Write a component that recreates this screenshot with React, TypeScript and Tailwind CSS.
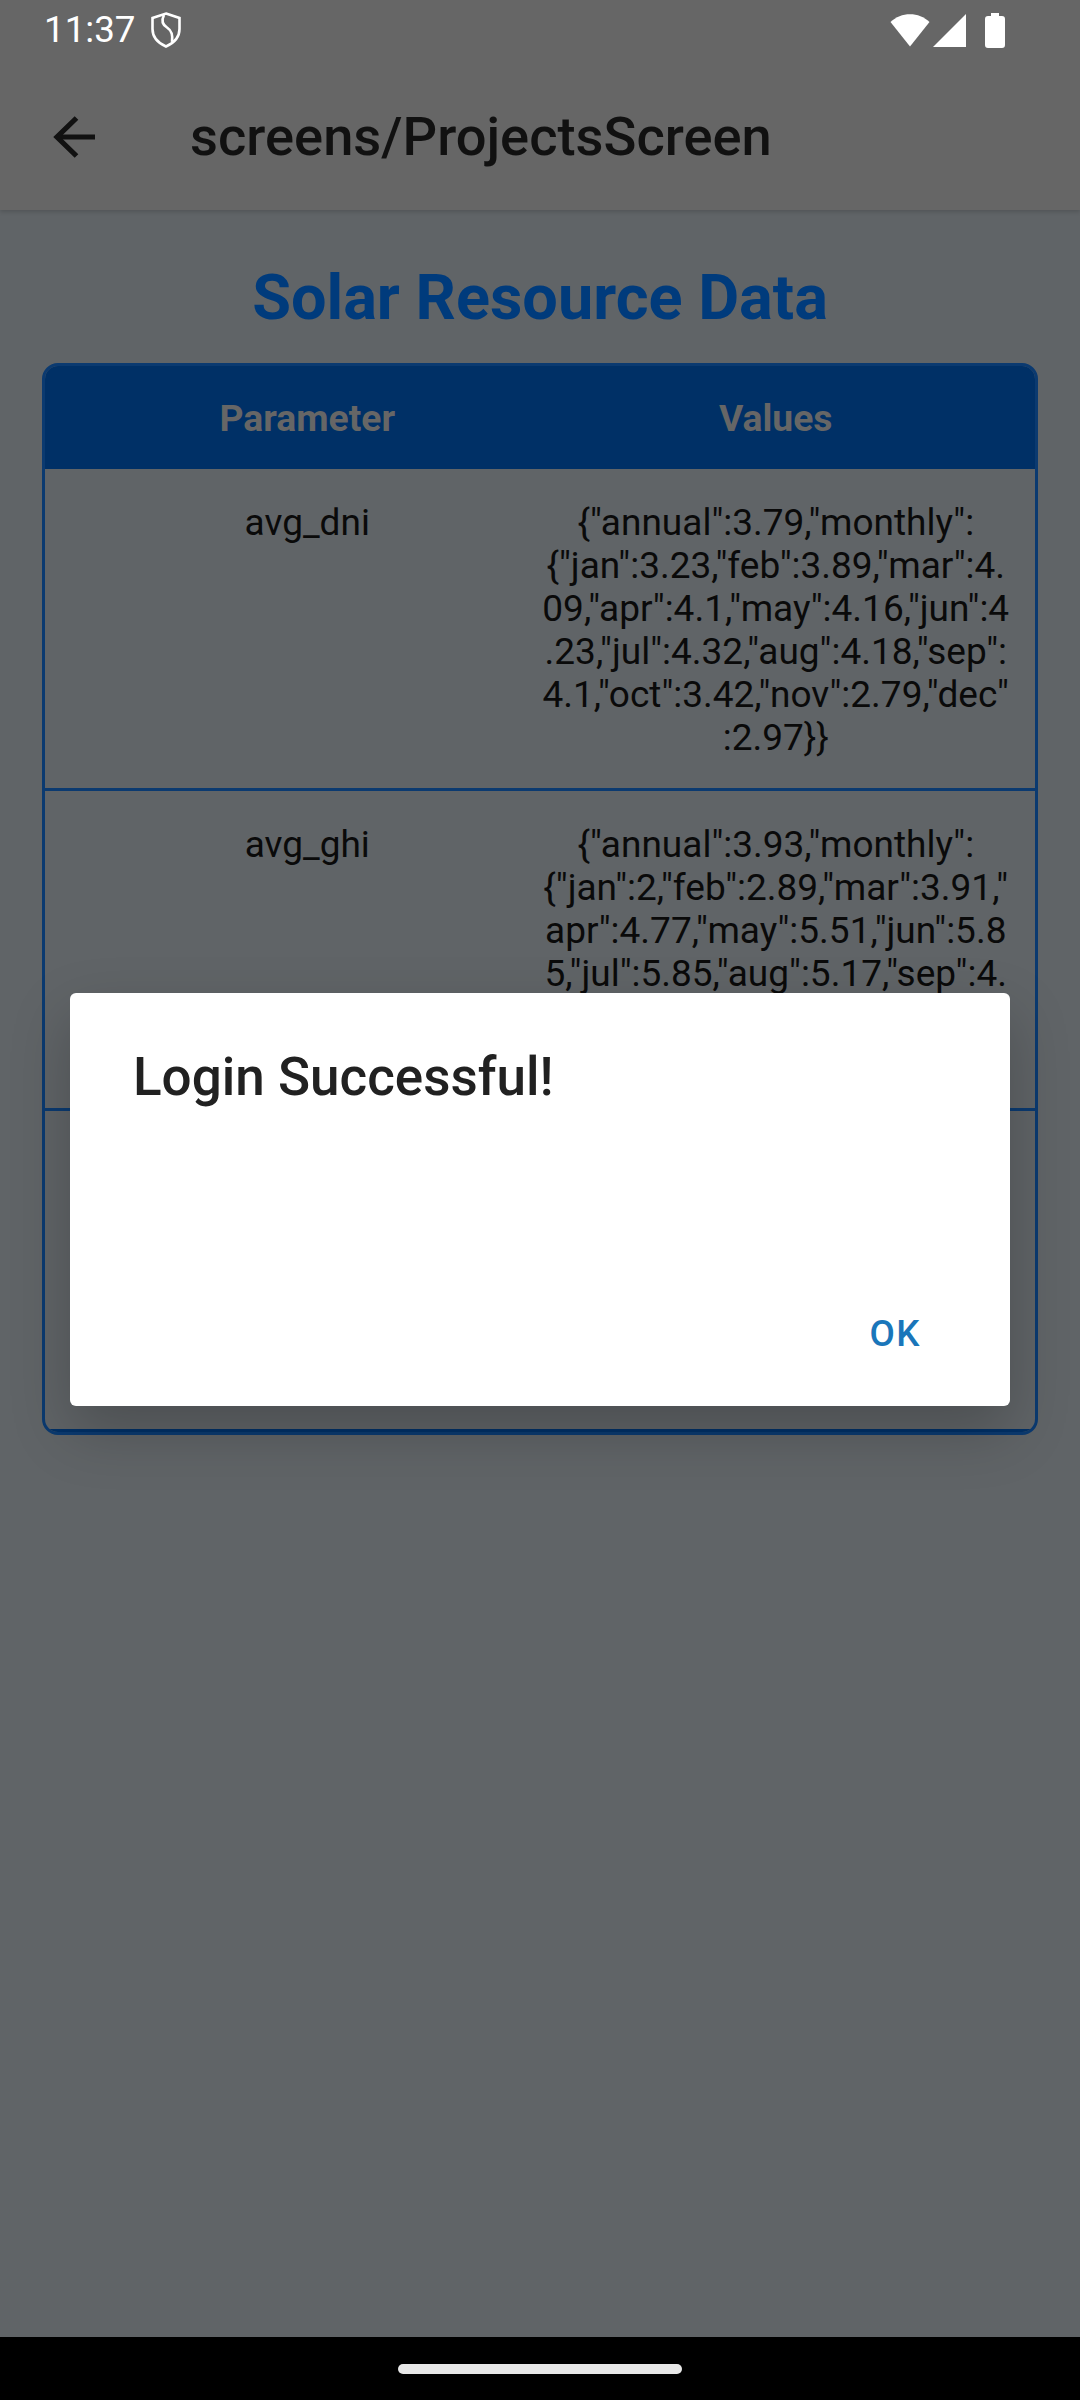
const dniLines = [
  '{"annual":3.79,"monthly":',
  '{"jan":3.23,"feb":3.89,"mar":4.',
  '09,"apr":4.1,"may":4.16,"jun":4',
  '.23,"jul":4.32,"aug":4.18,"sep":',
  '4.1,"oct":3.42,"nov":2.79,"dec"',
  ':2.97}}',
];

const ghiLines = [
  '{"annual":3.93,"monthly":',
  '{"jan":2,"feb":2.89,"mar":3.91,"',
  'apr":4.77,"may":5.51,"jun":5.8',
  '5,"jul":5.85,"aug":5.17,"sep":4.',
];

export default function App() {
  return (
    <div className="relative flex flex-col w-[1080px] h-[2400px] overflow-hidden bg-[#606467] font-['Roboto',sans-serif]">
      <div className="h-[210px] shrink-0 bg-[#666666] shadow-[0_2px_4px_rgba(0,0,0,0.15)]">
        <div className="flex items-center justify-between h-[60px] pl-[44px] pr-[75px]">
          <div className="flex items-center gap-[15px] text-white text-[36.75px] leading-[60px]">
            <span>11:37</span>
            <svg width="30" height="36" viewBox="0 0 30 36" fill="none" stroke="white" strokeWidth="2.6">
              <path d="M15 1.5 L28.5 6 V17 C28.5 25 23 31 15 34.5 C7 31 1.5 25 1.5 17 V6 Z" />
              <path d="M13 3 C10 9 12 13 16 15.5 C20 18 22 23 21 30" />
            </svg>
          </div>
          <div className="flex items-center">
            <svg width="40" height="34" viewBox="0 0 40 34" fill="white">
              <path d="M0.5 9 C11 -1.5 29 -1.5 39.5 9 L20 33.5 Z" />
            </svg>
            <svg className="ml-[3px]" width="33" height="33" viewBox="0 0 33 33" fill="white">
              <path d="M33 0 V33 H0 Z" />
            </svg>
            <svg className="ml-[19px]" width="20" height="35" viewBox="0 0 20 35" fill="white">
              <path d="M6 0 H14 V3 H17 Q20 3 20 6 V32 Q20 35 17 35 H3 Q0 35 0 32 V6 Q0 3 3 3 H6 Z" />
            </svg>
          </div>
        </div>
        <div className="flex items-center h-[150px] pt-[3px]">
          <svg className="ml-[53px]" width="42" height="42" viewBox="0 0 42 42" fill="none" stroke="#111111" strokeWidth="5.2">
            <path d="M42 21 H4" />
            <path d="M23.5 2 L4 21 L23.5 40" />
          </svg>
          <div className="ml-[95px] text-[54.3px] leading-[62px] font-medium text-[#111111]">screens/ProjectsScreen</div>
        </div>
      </div>

      <div className="flex-1 px-[42px]">
        <h1 className="h-[153px] pt-[50px] text-center text-[63px] leading-[75px] font-bold text-[#003b7c]">Solar Resource Data</h1>
        <div className="rounded-[16px] border-[3px] border-[#0b3a70] overflow-hidden">
          <div className="flex items-center h-[103px] pt-[3px] pl-[28px] pr-[25px] bg-[#003066] text-[37.3px] font-bold text-[#666666] text-center">
            <div className="flex-1">Parameter</div>
            <div className="flex-1">Values</div>
          </div>
          <div className="flex h-[322px] pl-[28px] pr-[25px] pt-[32px] border-b-[3px] border-[#0b3a70] text-[37px] leading-[43px] text-[#0a0a0a] text-center">
            <div className="flex-1">avg_dni</div>
            <div className="flex-1 whitespace-nowrap">
              {dniLines.map((line) => (
                <div key={line}>{line}</div>
              ))}
            </div>
          </div>
          <div className="flex h-[320px] pl-[28px] pr-[25px] pt-[32px] border-b-[3px] border-[#0b3a70] text-[37px] leading-[43px] text-[#0a0a0a] text-center">
            <div className="flex-1">avg_ghi</div>
            <div className="flex-1 whitespace-nowrap">
              {ghiLines.map((line) => (
                <div key={line}>{line}</div>
              ))}
            </div>
          </div>
          <div className="h-[321px] border-b-[3px] border-[#003066]" />
        </div>
      </div>

      <div className="flex items-start justify-center h-[63px] shrink-0 pt-[27px] bg-black">
        <div className="w-[284px] h-[10px] rounded-full bg-[#e8e8e8]" />
      </div>

      <div className="absolute left-[70px] top-[993px] flex flex-col justify-between w-[940px] h-[413px] bg-white rounded-[6px] shadow-[0_24px_60px_rgba(0,0,0,0.22)]">
        <div className="pl-[63px] pt-[53px] text-[53px] leading-[62px] font-medium text-[#212121]">Login Successful!</div>
        <div className="self-end pr-[89px] pb-[50px] text-[36.75px] leading-[44px] font-medium tracking-[1.5px] text-[#1a76ba]">OK</div>
      </div>
    </div>
  );
}
